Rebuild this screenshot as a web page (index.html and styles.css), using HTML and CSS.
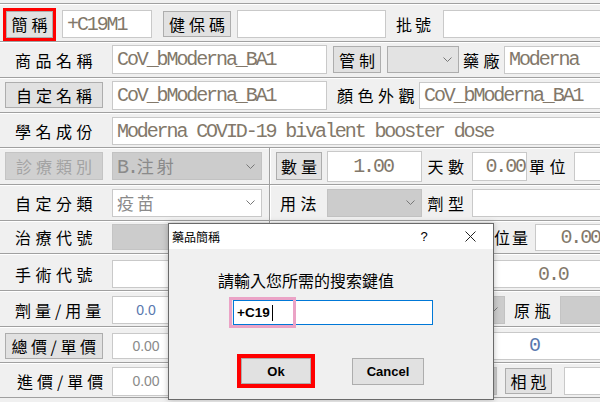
FILE: index.html
```html
<!DOCTYPE html>
<html lang="zh-Hant">
<head>
<meta charset="utf-8">
<title>藥品</title>
<link rel="stylesheet" href="styles.css">
</head>
<body>
<div class="form">
  <div class="strip"></div>

  <div class="row r1">
    <div class="hl"><div class="btn b-short">簡稱</div></div>
    <div class="inp mono i-code">+C19M1</div>
    <div class="btn b-nhi">健保碼</div>
    <div class="inp i-nhi"></div>
    <div class="lbl l-lot">批號</div>
    <div class="inp i-lot"></div>
  </div>

  <div class="row r2">
    <div class="lbl l-main">商品名稱</div>
    <div class="inp mono i-name">CoV_bModerna_BA1</div>
    <div class="btn b-ctrl">管制</div>
    <div class="combo c-ctrl"><svg class="chev" viewBox="0 0 9 5"><polyline points="0.5,0.5 4.5,4.5 8.5,0.5"/></svg></div>
    <div class="lbl l-mfr">藥廠</div>
    <div class="inp mono i-mfr">Moderna</div>
  </div>

  <div class="row r3">
    <div class="btn b-main">自定名稱</div>
    <div class="inp mono i-name i-name2">CoV_bModerna_BA1</div>
    <div class="lbl l-color">顏色外觀</div>
    <div class="inp mono i-color">CoV_bModerna_BA1</div>
  </div>

  <div class="row r4">
    <div class="lbl l-main">學名成份</div>
    <div class="inp mono i-sci">Moderna COVID-19 bivalent booster dose</div>
  </div>

  <div class="row r5 split">
    <div class="left">
      <div class="btn b-main dis">診療類別</div>
      <div class="combo c-left dis"><span class="ctext"><span class="m">B.</span>注射</span><svg class="chev" viewBox="0 0 9 5"><polyline points="0.5,0.5 4.5,4.5 8.5,0.5"/></svg></div>
    </div>
    <div class="right">
      <div class="btn b-qty">數量</div>
      <div class="inp mono i-qty">1.00</div>
      <div class="lbl l-mid">天數</div>
      <div class="inp mono i-days">0.00</div>
      <div class="lbl l-unit">單位</div>
      <div class="inp i-unit"></div>
    </div>
  </div>

  <div class="row r6 split">
    <div class="left">
      <div class="lbl l-main">自定分類</div>
      <div class="combo c-left c-white"><span class="ctext">疫苗</span><svg class="chev" viewBox="0 0 9 5"><polyline points="0.5,0.5 4.5,4.5 8.5,0.5"/></svg></div>
    </div>
    <div class="right">
      <div class="lbl l-usage">用法</div>
      <div class="combo c-usage dis"><svg class="chev" viewBox="0 0 9 5"><polyline points="0.5,0.5 4.5,4.5 8.5,0.5"/></svg></div>
      <div class="lbl l-mid">劑型</div>
      <div class="inp i-form"></div>
    </div>
  </div>

  <div class="row r7 split">
    <div class="left">
      <div class="lbl l-main">治療代號</div>
      <div class="inp i-left gray"></div>
    </div>
    <div class="right">
      <div class="lbl l-unitq">單位量</div>
      <div class="inp mono i-r7">0.00</div>
    </div>
  </div>

  <div class="row r8 split">
    <div class="left">
      <div class="lbl l-main">手術代號</div>
      <div class="inp i-left"></div>
    </div>
    <div class="right">
      <div class="inp mono i-wide i-r8">0.0</div>
    </div>
  </div>

  <div class="row r9 split">
    <div class="left">
      <div class="lbl l-main l-slash">劑量/用量</div>
      <div class="inp num blue i-num">0.0</div>
    </div>
    <div class="right">
      <div class="combo c-r9 dis"><svg class="chev" viewBox="0 0 9 5"><polyline points="0.5,0.5 4.5,4.5 8.5,0.5"/></svg></div>
      <div class="lbl l-bottle">原瓶</div>
      <div class="inp gray i-bottle"></div>
    </div>
  </div>

  <div class="row r10 split">
    <div class="left">
      <div class="btn b-main b-slash">總價/單價</div>
      <div class="inp num i-num i-num2">0.00</div>
    </div>
    <div class="right">
      <div class="inp mono blue i-wide i-r10">0</div>
    </div>
  </div>

  <div class="row r11 split">
    <div class="left">
      <div class="lbl l-main l-slash l-in">進價/單價</div>
      <div class="inp num i-num">0.00</div>
    </div>
    <div class="right">
      <div class="combo c-r11 dis"></div>
      <div class="btn b-rel">相剋</div>
      <div class="inp i-r11"></div>
    </div>
  </div>
</div>

<div class="dialog">
  <div class="titlebar">
    <span class="title">藥品簡稱</span>
    <span class="q">?</span>
    <span class="x"><svg viewBox="0 0 11 11"><line x1="0.5" y1="0.5" x2="10.5" y2="10.5"/><line x1="10.5" y1="0.5" x2="0.5" y2="10.5"/></svg></span>
  </div>
  <div class="dbody">
    <div class="dlabel">請輸入您所需的搜索鍵值</div>
    <div class="dinput"><span class="dtext">+C19</span><span class="caret"></span></div>
    <div class="dbtns">
      <div class="hl2"><div class="dbtn ok">Ok</div></div>
      <div class="dbtn cancel">Cancel</div>
    </div>
  </div>
  <div class="pink"></div>
</div>
</body>
</html>
```

FILE: styles.css
```css
html, body {
  margin: 0;
  padding: 0;
  overflow: hidden;
}
body {
  width: 600px;
  height: 402px;
  background: #f0f0f0;
  font-family: "Noto Sans CJK TC", sans-serif;
  color: #000;
  position: relative;
}
.form {
  width: 600px;
}
.strip {
  height: 4px;
  box-sizing: border-box;
  border-bottom: 1px solid #a0a0a0;
}
.row {
  display: flex;
  align-items: center;
  box-sizing: border-box;
  border-bottom: 1px solid #a0a0a0;
  box-shadow: inset 0 1px 0 #fff;
  overflow: hidden;
}
.r1 { height: 38px; padding-top: 3px; }
.r2 { height: 36px; }
.r3 { height: 35px; }
.r4 { height: 35px; padding-top: 2px; }
.r5 { height: 37px; }
.r6 { height: 36px; }
.r7 { height: 33px; }
.r8 { height: 37px; }
.r9 { height: 36px; }
.r10 { height: 36px; }
.r11 { height: 35px; }

.split { align-items: stretch; }
.left {
  width: 270px;
  flex: none;
  box-sizing: border-box;
  border-right: 1px solid #a0a0a0;
  display: flex;
  align-items: center;
}
.right {
  flex: 1;
  display: flex;
  align-items: center;
  box-shadow: inset 1px 0 0 #fff;
  min-width: 0;
}
.r8 .left, .r8 .right { padding-top: 4px; }
.r9 .left, .r9 .right,
.r10 .left, .r10 .right,
.r11 .left, .r11 .right { padding-top: 2px; }

/* generic controls */
.lbl {
  flex: none;
  box-sizing: border-box;
  font-size: 16px;
  line-height: 20px;
  letter-spacing: 4.5px;
  white-space: nowrap;
}
.btn {
  flex: none;
  box-sizing: border-box;
  background: #e1e1e1;
  border: 1px solid #adadad;
  display: flex;
  align-items: center;
  justify-content: center;
  font-size: 16px;
  line-height: 20px;
  letter-spacing: 4px;
  padding-left: 4px;
  white-space: nowrap;
}
.btn.dis {
  background: #d0d0d0;
  border-color: #c4c4c4;
  color: #a3a3a3;
}
.inp {
  flex: none;
  box-sizing: border-box;
  background: #fff;
  border: 1px solid #c9c9c9;
  display: flex;
  align-items: center;
  padding: 0 4px;
  overflow: hidden;
  white-space: nowrap;
}
.inp.gray {
  background: #cccccc;
  border-color: #c4c4c4;
}
.mono {
  font-family: "Liberation Mono", monospace;
  font-size: 20px;
  letter-spacing: -2.1px;
  color: #82786a;
}
.num {
  font-family: "Liberation Sans", sans-serif;
  font-size: 14px;
  color: #8a8a8a;
  justify-content: center;
}
.blue { color: #5878ae; }
.combo {
  flex: none;
  box-sizing: border-box;
  background: #e3e3e3;
  border: 1px solid #adadad;
  display: flex;
  align-items: center;
  padding: 0 6px 0 4px;
  overflow: hidden;
}
.combo.dis {
  background: #cccccc;
  border-color: #c2c2c2;
}
.combo.c-white {
  background: #fff;
  border-color: #c9c9c9;
}
.ctext {
  flex: 1;
  font-size: 17px;
  letter-spacing: 3px;
  color: #8a8a8a;
  white-space: nowrap;
}
.ctext .m {
  font-family: "Liberation Mono", monospace;
  font-size: 20px;
  letter-spacing: -2.1px;
}
.chev {
  width: 9px;
  height: 5px;
  margin-left: auto;
  flex: none;
  fill: none;
  stroke: #777;
  stroke-width: 1;
}

/* row 1 */
.hl {
  flex: none;
  margin-left: 3px;
  border: 3px solid #ff0000;
  display: flex;
}
.b-short { width: 47px; height: 27px; }
.i-code { margin-left: 6px; width: 90px; height: 28px; }
.b-nhi { margin-left: 11px; width: 68px; height: 26px; }
.i-nhi { margin-left: 6px; width: 149px; height: 28px; }
.l-lot { width: 57px; padding-left: 10px; letter-spacing: 3px; }
.i-lot { width: 160px; height: 28px; }

/* row 2 */
.l-main { margin-left: 5px; width: 97px; padding-left: 10px; }
.i-name { margin-left: 10px; width: 215px; height: 29px; }
.b-ctrl { margin-left: 6px; width: 48px; height: 27px; }
.c-ctrl { margin-left: 6px; width: 72px; height: 27px; }
.l-mfr { width: 45px; text-align: center; padding-left: 4px; }
.i-mfr { width: 100px; height: 28px; }

/* row 3 */
.b-main { margin-left: 5px; width: 98px; height: 26px; }
.i-name2 { margin-left: 9px; }
.l-color { width: 92px; padding-left: 10px; }
.i-color { width: 185px; height: 27px; }

/* row 4 */
.i-sci { margin-left: 10px; width: 492px; height: 28px; }

/* row 5 */
.r5 .b-main { height: 28px; }
.c-left { margin-left: 9px; width: 150px; height: 28px; }
.r6 .c-left { margin-left: 10px; }
.b-qty { margin-left: 6px; width: 46px; height: 28px; }
.i-qty { margin-left: 5px; width: 95px; height: 31px; justify-content: center; padding-right: 7px; }
.l-mid { width: 50px; text-align: center; padding-left: 2px; }
.i-days { width: 55px; height: 29px; justify-content: flex-end; padding-right: 1px; }
.l-unit { width: 47px; padding-left: 2px; }
.i-unit { width: 30px; height: 29px; }

/* row 6 */
.l-usage { width: 57px; text-align: center; padding-left: 4px; }
.c-usage { width: 95px; height: 28px; }
.i-form { width: 132px; height: 28px; }

/* row 7 */
.i-left { margin-left: 10px; width: 150px; height: 26px; }
.r8 .i-left { height: 28px; }
.l-unitq { margin-left: 180px; width: 80px; text-align: right; letter-spacing: 2px; }
.i-r7 { margin-left: 5px; width: 70px; height: 27px; justify-content: flex-end; padding-right: 4px; }

/* row 8/10 */
.i-wide { margin-left: 202px; width: 132px; height: 28px; }
.i-r8 { padding-left: 65px; }
.i-r10 { padding-left: 56px; }

/* row 9 */
.l-slash { letter-spacing: 4px; }
.l-in { padding-left: 12px; }
.i-num { margin-left: 10px; width: 68px; height: 28px; }
.i-num2 { margin-left: 9px; height: 26px; }
.c-r9 { margin-left: 150px; width: 85px; height: 28px; }
.l-bottle { width: 55px; text-align: center; padding-left: 4px; }
.i-bottle { width: 45px; height: 28px; }

/* row 10 */
.b-slash { letter-spacing: 3.5px; padding-left: 3px; }

/* row 11 */
.r11 .i-num { height: 29px; }
.c-r11 { margin-left: 150px; width: 77px; height: 28px; }
.b-rel { margin-left: 8px; width: 47px; height: 26px; }
.i-r11 { margin-left: 12px; width: 40px; height: 28px; }

/* dialog */
.dialog {
  position: absolute;
  left: 168px;
  top: 223px;
  width: 326px;
  height: 177px;
  box-sizing: border-box;
  border: 1px solid #6a6a6a;
  background: #f0f0f0;
  box-shadow: 0 0 6px rgba(0, 0, 0, 0.25);
}
.titlebar {
  height: 25px;
  background: #fff;
  display: flex;
  align-items: center;
  padding-left: 3px;
}
.title {
  flex: 1;
  font-size: 12px;
  line-height: 14px;
}
.q {
  width: 20px;
  margin-right: 13px;
  text-align: center;
  font-family: "Liberation Sans", sans-serif;
  font-size: 13px;
}
.x {
  width: 46px;
  height: 25px;
  display: flex;
  align-items: center;
  justify-content: center;
}
.x svg {
  width: 11px;
  height: 11px;
  stroke: #222;
  stroke-width: 1;
}
.dbody {
  padding-top: 21px;
}
.dlabel {
  margin-left: 49px;
  font-size: 16px;
  line-height: 20px;
}
.dinput {
  margin: 10px 0 0 64px;
  width: 200px;
  height: 25px;
  box-sizing: border-box;
  border: 1px solid #0078d7;
  background: #fff;
  display: flex;
  align-items: center;
  padding-left: 3px;
}
.dtext {
  font-family: "Liberation Sans", sans-serif;
  font-weight: bold;
  font-size: 13.5px;
}
.caret {
  width: 1px;
  height: 16px;
  background: #000;
  margin-left: 2px;
}
.dbtns {
  display: flex;
  align-items: center;
  margin: 29px 0 0 68px;
}
.hl2 {
  border: 4px solid #ff0000;
  display: flex;
}
.dbtn {
  box-sizing: border-box;
  background: #e1e1e1;
  border: 1px solid #adadad;
  display: flex;
  align-items: center;
  justify-content: center;
  font-family: "Liberation Sans", sans-serif;
  font-weight: bold;
  font-size: 13px;
}
.ok { width: 70px; height: 26px; }
.cancel { margin-left: 37px; width: 72px; height: 27px; }
.pink {
  position: absolute;
  left: 60px;
  top: 73px;
  width: 67px;
  height: 31px;
  box-sizing: border-box;
  border: 3px solid #eba3c6;
}
```
